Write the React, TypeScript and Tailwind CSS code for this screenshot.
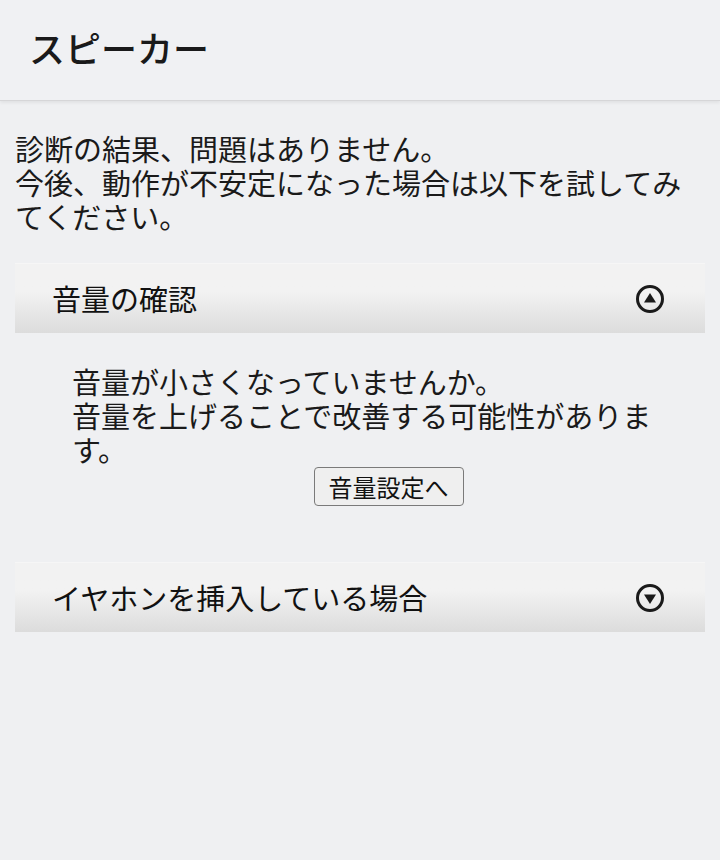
import { useState } from "react";

const FONT = { fontFamily: '"Noto Sans CJK JP", "Noto Sans", sans-serif' };

function ToggleIcon({ open }: { open: boolean }) {
  return (
    <svg width="30" height="30" viewBox="0 0 30 30" aria-hidden>
      <circle cx="15" cy="15" r="12.5" fill="none" stroke="#1a1a1a" strokeWidth="3" />
      {open ? (
        <polygon points="15,9 21,18.5 9,18.5" fill="#1a1a1a" />
      ) : (
        <polygon points="9,11.5 21,11.5 15,21" fill="#1a1a1a" />
      )}
    </svg>
  );
}

function Section({
  title,
  open,
  onToggle,
  children,
}: {
  title: string;
  open: boolean;
  onToggle: () => void;
  children?: React.ReactNode;
}) {
  return (
    <div>
      <button
        onClick={onToggle}
        className="flex h-[70px] w-full items-center justify-between border-t border-[#f6f6f6] bg-gradient-to-b from-[#f2f2f2] from-40% to-[#dcdcdc] pl-[37px] pr-[40px] text-left"
      >
        <span className="text-[29px] leading-none text-[#111]">{title}</span>
        <ToggleIcon open={open} />
      </button>
      {open && children}
    </div>
  );
}

export default function App() {
  const [openVolume, setOpenVolume] = useState(true);
  const [openEarphone, setOpenEarphone] = useState(false);

  return (
    <div style={FONT} className="min-h-[860px] w-[720px] bg-[#eff0f2] text-[#1a1a1a]">
      {/* Header */}
      <header className="flex h-[101px] items-center border-b border-[#d6d6d8] bg-[#f0f1f3] pl-[29px] shadow-[0_2px_3px_rgba(0,0,0,0.06)]">
        <h1 className="pb-[6px] text-[36px] font-medium leading-none text-[#1a1a1a]">スピーカー</h1>
      </header>

      <main className="px-[15px]">
        <p className="mt-[30px] text-[29px] leading-[34px]">
          診断の結果、問題はありません。
          <br />
          今後、動作が不安定になった場合は以下を試してみてください。
        </p>

        <div className="mt-[30px]">
          <Section title="音量の確認" open={openVolume} onToggle={() => setOpenVolume((v) => !v)}>
            <div className="pb-[56px] pl-[57px] pt-[31px]">
              <p className="pr-[40px] text-[29px] leading-[34px]">
                音量が小さくなっていませんか。
                <br />
                音量を上げることで改善する可能性があります。
              </p>
              <div className="flex justify-center pt-[1px]">
                <button className="h-[39px] rounded-[4px] border border-[#7a7a7a] bg-[#efefef] px-[14px] text-[24px] leading-none text-[#111]">
                  音量設定へ
                </button>
              </div>
            </div>
          </Section>

          <Section
            title="イヤホンを挿入している場合"
            open={openEarphone}
            onToggle={() => setOpenEarphone((v) => !v)}
          />
        </div>
      </main>
    </div>
  );
}
